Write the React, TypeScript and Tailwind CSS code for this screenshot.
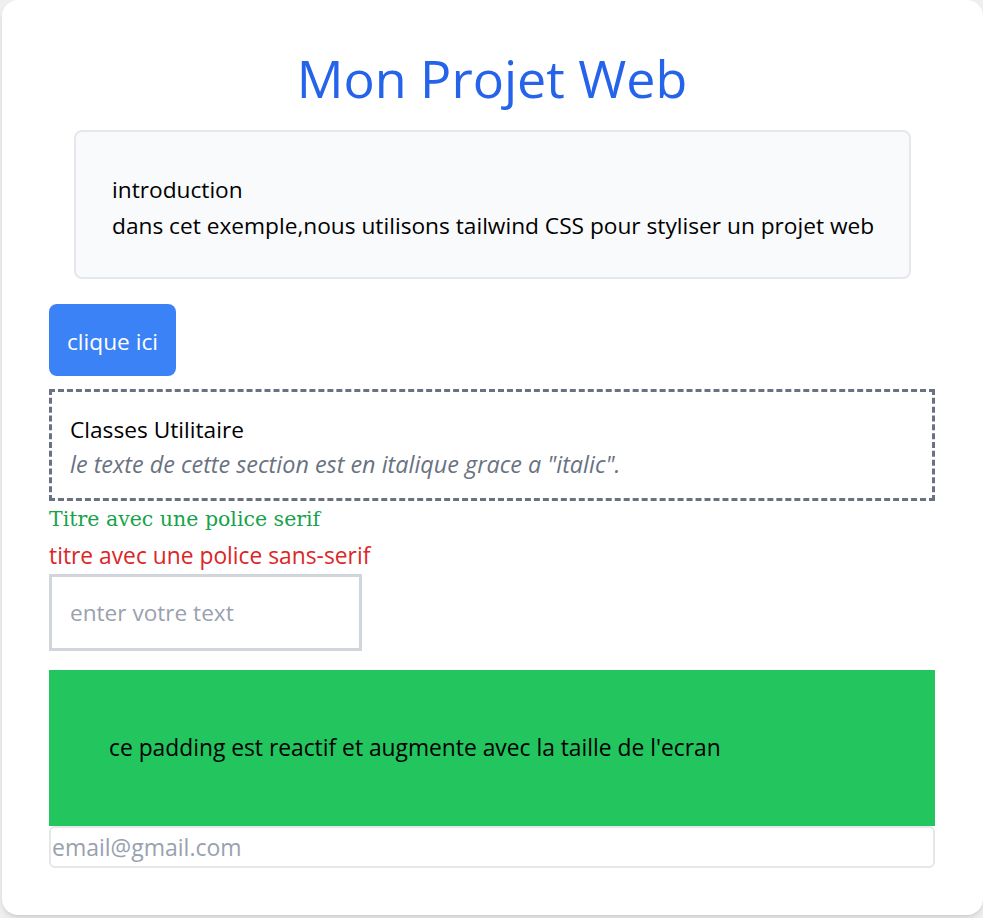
export default function App() {
  return (
    <div className="min-h-screen bg-[#efefef] pl-[2px] pb-[3px] font-['Open_Sans',sans-serif]">
      <div className="rounded-2xl bg-white pl-[47px] pr-12 pt-12 pb-[47px] shadow-md">
        {/* titre principal */}
        <h1 className="text-center text-[52px] leading-[60px] text-[#2563eb]">Mon Projet Web</h1>

        <div className="ml-[25px] mr-6 mt-[22px] rounded-lg border-[2.5px] border-gray-200 bg-gray-50 pl-9 pt-[40px] pb-[33px] text-[22.7px] leading-9 text-black">
          <h2>introduction</h2>
          <p>dans cet exemple,nous utilisons tailwind CSS pour styliser un projet web</p>
        </div>

        <button className="mt-[25px] rounded-lg bg-[#3b82f6] px-[18px] pt-[20px] pb-[16px] text-[22.7px] leading-9 text-white">
          clique ici
        </button>

        <div className="mt-[13px] border-[3px] border-dashed border-gray-500 pl-[18px] pt-5 pb-4 text-[22.7px] leading-[35px]">
          <h3 className="text-black">Classes Utilitaire</h3>
          <p className="text-[23.4px] italic text-gray-500">le texte de cette section est en italique grace a "italic".</p>
        </div>

        <h2 className="font-['DejaVu_Serif',serif] text-[20.5px] leading-9 text-[#16a34a]">Titre avec une police serif</h2>
        <h2 className="text-[22.8px] leading-[37px] text-[#dc2626]">titre avec une police sans-serif</h2>

        <input
          type="text"
          placeholder="enter votre text"
          className="block h-[77px] w-[313px] border-[3px] border-gray-300 px-[18px] text-[22.6px] placeholder:text-gray-400"
        />

        <div className="mt-[19px] bg-[#22c55e] px-[60px] py-[59px] text-[22.8px] leading-[38px] text-black">
          ce padding est reactif et augmente avec la taille de l'ecran
        </div>

        <input
          type="email"
          placeholder="email@gmail.com"
          className="block h-[42px] w-full rounded-md border-[2.5px] border-gray-200 pl-[1px] text-[23px] placeholder:text-gray-400"
        />
      </div>
    </div>
  );
}
